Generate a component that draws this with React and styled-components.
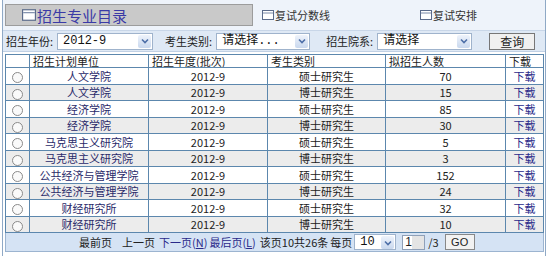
import React from 'react'
import styled, { createGlobalStyle } from 'styled-components'

const GlobalStyle = createGlobalStyle`
  body {
    margin: 0;
    background: #ffffff;
    font-family: "Liberation Sans", "Noto Sans CJK SC", sans-serif;
    font-size: 12px;
    color: #222;
  }
`

const rows = [
  ['人文学院', '2012-9', '硕士研究生', '70'],
  ['人文学院', '2012-9', '博士研究生', '15'],
  ['经济学院', '2012-9', '硕士研究生', '85'],
  ['经济学院', '2012-9', '博士研究生', '30'],
  ['马克思主义研究院', '2012-9', '硕士研究生', '5'],
  ['马克思主义研究院', '2012-9', '博士研究生', '3'],
  ['公共经济与管理学院', '2012-9', '硕士研究生', '152'],
  ['公共经济与管理学院', '2012-9', '博士研究生', '24'],
  ['财经研究所', '2012-9', '硕士研究生', '32'],
  ['财经研究所', '2012-9', '博士研究生', '10'],
]

const BoxIcon = ({ size = 12 }) => (
  <svg width={size} height={size - 2} viewBox="0 0 12 10">
    <rect x="0.5" y="0.5" width="11" height="9" fill="#fff" stroke="#5a6a8a" />
    <line x1="1" y1="3" x2="11" y2="3" stroke="#7a8aa8" />
  </svg>
)

const Arrow = () => (
  <ArrowBox>
    <svg width="8" height="6" viewBox="0 0 8 6">
      <path d="M1 1.5 L4 4.5 L7 1.5" fill="none" stroke="#4d6fa8" strokeWidth="1.6" />
    </svg>
  </ArrowBox>
)

const App = () => {
  return (
    <>
      <GlobalStyle />
      <Page>
        <TopBar>
          <TitleBox>
            <BoxIcon size={14} />
            <span>招生专业目录</span>
          </TitleBox>
          <TopLink w={158}>
            <BoxIcon />复试分数线
          </TopLink>
          <TopLink>
            <BoxIcon />复试安排
          </TopLink>
        </TopBar>
        <FilterRow>
          <Label>招生年份:</Label>
          <Select w={96}>2012-9<Arrow /></Select>
          <Label gap={12}>考生类别:</Label>
          <Select w={94}>请选择...<Arrow /></Select>
          <Label gap={16}>招生院系:</Label>
          <Select w={95}>请选择<Arrow /></Select>
          <QueryButton>查询</QueryButton>
        </FilterRow>
        <Table>
          <thead>
            <tr>
              <Th w={20}></Th>
              <Th w={115}>招生计划单位</Th>
              <Th w={115}>招生年度(批次)</Th>
              <Th w={114}>考生类别</Th>
              <Th w={116}>拟招生人数</Th>
              <Th>下载</Th>
            </tr>
          </thead>
          <tbody>
            {rows.map((r, i) => (
              <Tr key={i} odd={i % 2 === 1}>
                <Td><Radio /></Td>
                <Td unit>{r[0]}</Td>
                <Td>{r[1]}</Td>
                <Td>{r[2]}</Td>
                <Td>{r[3]}</Td>
                <Td><DlLink>下载</DlLink></Td>
              </Tr>
            ))}
          </tbody>
        </Table>
        <Pager>
          <PagerText>最前页</PagerText>
          <PagerText gap={8}>上一页</PagerText>
          <PagerLink gap={2}>下一页(<u>N</u>)</PagerLink>
          <PagerLink gap={2}>最后页(<u>L</u>)</PagerLink>
          <PagerText gap={4}>该页10共26条</PagerText>
          <PagerText gap={0}>每页</PagerText>
          <Select w={42} small>10<Arrow /></Select>
          <PageInput>1</PageInput>
          <PagerText gap={3}>/3</PagerText>
          <GoButton>GO</GoButton>
        </Pager>
      </Page>
    </>
  )
}

export default App

const Page = styled.div`
  width: 542px;
  margin-left: 2px;
  border-left: 1px solid #8fa9c6;
  border-right: 1px solid #8fa9c6;
  height: 256px;
  background: #fff;
`

const TopBar = styled.div`
  display: flex;
  align-items: center;
  height: 30px;
  background: #eef3fa;
  padding-left: 2px;
  border-bottom: 1px solid #c8d6e8;
`

const TitleBox = styled.div`
  display: flex;
  align-items: center;
  gap: 1px;
  width: 230px;
  height: 20px;
  padding-left: 16px;
  background: #c9c9c9;
  border: 1px solid #9c9c9c;
  color: #3a3aa6;
  font-size: 15px;
  font-family: "Noto Sans CJK SC", sans-serif;
  margin-right: 9px;
`

const TopLink = styled.div`
  display: flex;
  align-items: center;
  gap: 1px;
  ${p => (p.w ? `width: ${p.w}px;` : '')}
  color: #333;
  font-size: 11px;
  font-family: "Noto Sans CJK SC", sans-serif;
`

const FilterRow = styled.div`
  display: flex;
  align-items: center;
  height: 20px;
  background: #dfe9f5;
  padding-left: 3px;
  border-bottom: 1px solid #c0d0e4;
`

const Label = styled.span`
  flex-shrink: 0;
  white-space: nowrap;
  font-family: "Noto Sans CJK SC", sans-serif;
  font-size: 11px;
  color: #222;
  margin-left: ${p => p.gap || 0}px;
  margin-right: 4px;
`

const Select = styled.div`
  position: relative;
  flex-shrink: 0;
  box-sizing: border-box;
  width: ${p => p.w}px;
  height: ${p => (p.small ? 16 : 17)}px;
  background: #fff;
  border: 1px solid #9fb3cc;
  padding-left: 5px;
  font-size: 12px;
  line-height: 15px;
  white-space: nowrap;
  font-family: "Liberation Mono", "Noto Sans CJK SC", monospace;
  color: #111;
`

const ArrowBox = styled.div`
  position: absolute;
  right: 1px;
  top: 1px;
  width: 13px;
  height: 13px;
  background: linear-gradient(#eef3fb, #c9d8ee);
  border-radius: 2px;
  display: flex;
  align-items: center;
  justify-content: center;
`

const QueryButton = styled.div`
  flex-shrink: 0;
  margin-left: 17px;
  width: 44px;
  height: 15px;
  border: 1px solid #777;
  background: #f0f0f0;
  text-align: center;
  line-height: 15px;
  font-size: 12px;
  font-family: "Noto Sans CJK SC", sans-serif;
`

const Table = styled.table`
  border-collapse: collapse;
  margin: 2px 0 0 2px;
  width: 539px;
  border: 1px solid #5c87ad;
  font-size: 11px;
  font-family: "Noto Sans CJK SC", sans-serif;
  table-layout: fixed;
`

const Th = styled.th`
  ${p => (p.w ? `width: ${p.w}px;` : '')}
  height: 12px;
  padding: 0 0 0 3px;
  text-align: left;
  font-weight: normal;
  border: 1px solid #5c87ad;
  background: #fff;
  line-height: 12px;
  white-space: nowrap;
  overflow: hidden;
`

const Tr = styled.tr`
  background: ${p => (p.odd ? '#ececec' : '#ffffff')};
`

const Td = styled.td`
  height: 15.5px;
  padding: 0;
  text-align: center;
  border: 1px solid #5c87ad;
  color: ${p => (p.unit ? '#2a2a6a' : '#222')};
  line-height: 14px;
  white-space: nowrap;
  overflow: hidden;
`

const Radio = styled.span`
  display: inline-block;
  width: 9px;
  height: 9px;
  border: 1px solid #8a8a8a;
  border-radius: 50%;
  background: #fafafa;
  vertical-align: middle;
`

const DlLink = styled.span`
  color: #2a2a8a;
`

const Pager = styled.div`
  display: flex;
  align-items: center;
  margin-left: 2px;
  width: 539px;
  box-sizing: border-box;
  height: 19px;
  padding-left: 73px;
  background: #d5e3f4;
  border: 1px solid #9cb4d0;
  border-top: none;
  font-size: 11px;
  font-family: "Noto Sans CJK SC", sans-serif;
  white-space: nowrap;
`

const PagerText = styled.span`
  color: #222;
  margin-left: ${p => p.gap || 0}px;
  margin-right: 2px;
`

const PagerLink = styled.span`
  color: #2a2a8a;
  margin-left: ${p => p.gap || 0}px;
`

const PageInput = styled.div`
  margin-left: 6px;
  width: 23px;
  height: 15px;
  box-sizing: border-box;
  border: 1px solid #8fa0b8;
  background: linear-gradient(90deg, #fff 45%, #e4e4e4 45%);
  padding-left: 2px;
  line-height: 13px;
  font-size: 12px;
  font-family: "Liberation Sans", sans-serif;
`

const GoButton = styled.div`
  margin-left: 4px;
  width: 28px;
  height: 14px;
  border: 1px solid #888;
  background: #f2f2f2;
  text-align: center;
  line-height: 14px;
  font-size: 11px;
  font-family: "Liberation Sans", sans-serif;
`
